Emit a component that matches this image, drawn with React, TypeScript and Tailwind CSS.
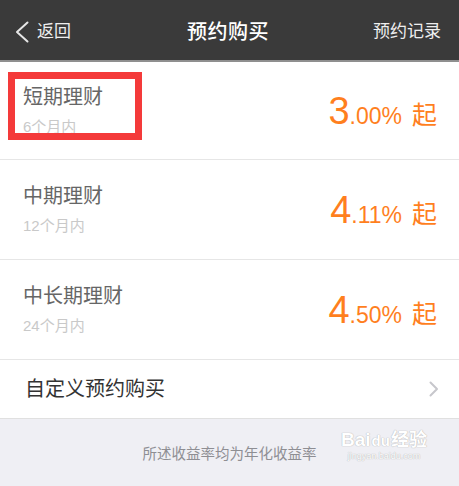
import React from "react";

const font = { fontFamily: '"Liberation Sans", "Noto Sans CJK SC", sans-serif' };

function Rate({ big, small }: { big: string; small: string }) {
  return (
    <div className="flex items-baseline text-[#ff7f1e] leading-none">
      <span className="text-[38px]">{big}</span>
      <span className="text-[23px]">{small}</span>
      <span className="text-[25px] ml-[10px]">起</span>
    </div>
  );
}

function Row({ title, sub, big, small, h }: { title: string; sub: string; big: string; small: string; h: string }) {
  return (
    <div className={`flex items-center justify-between bg-white border-b border-[#e6e6e6] pl-[23px] pr-[22px] ${h}`}>
      <div className="flex flex-col gap-[6px]">
        <div className="text-[20px] leading-[26px] text-[#666666]">{title}</div>
        <div className="text-[15px] leading-[22px] text-[#c9c9c9]">{sub}</div>
      </div>
      <Rate big={big} small={small} />
    </div>
  );
}

export default function App() {
  return (
    <div className="relative w-[459px] h-[486px] bg-[#efeff4] overflow-hidden" style={font}>
      <div className="h-[62px] bg-[#3a3a3a] border-b-2 border-[#8f8f8f] flex items-center justify-between pl-[15px] pr-[18px] pt-[4px]">
        <div className="flex items-center gap-[8px] w-[120px]">
          <svg width="14" height="22" viewBox="0 0 14 22" fill="none">
            <path d="M12.5 1.5 L2 11 L12.5 20.5" stroke="#e6e6e6" strokeWidth="2" strokeLinecap="round" strokeLinejoin="round" />
          </svg>
          <span className="text-[17px] text-[#eeeeee]">返回</span>
        </div>
        <div className="text-[20px] font-medium text-white tracking-[0.5px]">预约购买</div>
        <div className="w-[120px] text-right text-[17px] text-[#eeeeee]">预约记录</div>
      </div>

      <Row title="短期理财" sub="6个月内" big="3" small=".00%" h="h-[98px]" />
      <Row title="中期理财" sub="12个月内" big="4" small=".11%" h="h-[100px]" />
      <Row title="中长期理财" sub="24个月内" big="4" small=".50%" h="h-[100px]" />

      <div className="h-[59px] bg-white border-b border-[#e0e0e0] flex items-center justify-between pl-[25px] pr-[20px]">
        <span className="text-[20px] text-[#333333]">自定义预约购买</span>
        <svg width="10" height="16" viewBox="0 0 10 16" fill="none">
          <path d="M1.5 1.5 L8 8 L1.5 14.5" stroke="#c7c7cc" strokeWidth="2" strokeLinecap="round" strokeLinejoin="round" />
        </svg>
      </div>

      <div className="flex justify-center pt-[25px]">
        <span className="text-[14.5px] text-[#8e8e93]">所述收益率均为年化收益率</span>
      </div>

      {/* annotation box */}
      <div className="absolute left-[8px] top-[72px] w-[134px] h-[68px] border-[7px] border-[#f43a3a]" />

      {/* watermark */}
      <div className="absolute left-[341px] top-[430px] flex flex-col items-center text-white" style={{ textShadow: "0 0 1px #b8b8b8, 0 0 1px #b8b8b8" }}>
        <div className="flex items-baseline text-[19px] leading-none font-bold">
          <span>Bai</span>
          <span className="mx-[1px] text-[15px]">du</span>
          <span className="text-[18px]">经验</span>
        </div>
        <div className="text-[9px] leading-none mt-[3px]">jingyan.baidu.com</div>
      </div>
    </div>
  );
}
